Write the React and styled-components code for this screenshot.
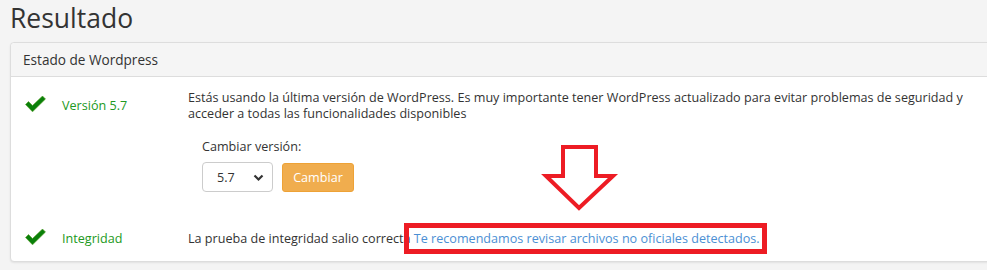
import React from "react";
import styled, { createGlobalStyle } from "styled-components";

const Global = createGlobalStyle`
  html, body { margin: 0; padding: 0; background: #f4f4f4; overflow: hidden; }
  body { font-family: "Open Sans", "Liberation Sans", sans-serif; color: #333; font-size: 12.6px; }
`;

const Page = styled.div`
  position: relative;
  width: 987px;
  height: 270px;
  padding-left: 10px;
  box-sizing: border-box;
  overflow: hidden;
`;

const Title = styled.h1`
  margin: 0;
  padding-top: 1px;
  font-size: 26.5px;
  font-weight: 400;
  line-height: 34px;
  color: #333;
  height: 41px;
`;

const Panel = styled.section`
  width: 1000px;
  background: #fff;
  border: 1px solid #ddd;
  border-radius: 4px;
  box-shadow: 0 1px 2px rgba(0, 0, 0, 0.08);
`;

const PanelHeader = styled.div`
  background: #f5f5f5;
  border-bottom: 1px solid #ddd;
  border-radius: 4px 4px 0 0;
  height: 33px;
  padding: 0 12px;
  display: flex;
  align-items: center;
  font-size: 13.6px;
  color: #333;
`;

const PanelBody = styled.div`
  padding: 13px 15px 14px 14px;
  display: grid;
  grid-template-columns: 37px 126px 790px;
  align-items: center;
`;

const Icon = styled.span`
  display: flex;
  align-items: center;
  margin-top: -4px;
`;

const Label = styled.span`
  color: #229922;
  line-height: 16px;
`;

const Text = styled.div`
  line-height: 16px;
  color: #333;
`;

const Form = styled.div`
  grid-column: 3;
  padding-left: 14px;
  margin-top: 16px;
  margin-bottom: 39px;
`;

const FormLabel = styled.div`
  line-height: 18px;
  margin-bottom: 6px;
`;

const Controls = styled.div`
  display: flex;
  align-items: center;
  gap: 9px;
`;

const SelectBox = styled.div`
  position: relative;
  width: 71px;
  height: 30px;
  box-sizing: border-box;
  border: 1px solid #ccc;
  border-radius: 4px;
  background: #fff;
  display: flex;
  align-items: center;
  padding-left: 14px;
  color: #333;
  font-size: 12.6px;
`;

const Chevron = styled.svg`
  position: absolute;
  right: 8px;
  top: 11px;
`;

const Button = styled.button`
  height: 29px;
  width: 72px;
  border: 1px solid #eea236;
  border-radius: 3px;
  background: #f0ad4e;
  color: #fff;
  font-family: inherit;
  font-size: 12.6px;
  padding: 0;
`;

const Link = styled.a`
  color: #4b8fd4;
  text-decoration: none;
`;

const RedBox = styled.div`
  position: absolute;
  left: 404px;
  top: 223px;
  width: 363px;
  height: 31px;
  box-sizing: border-box;
  border: 5px solid #ed1c24;
  pointer-events: none;
`;

const Arrow = styled.svg`
  position: absolute;
  left: 540px;
  top: 140px;
`;

const Check = () => (
  <svg width="21" height="16" viewBox="0 0 21 16">
    <path d="M0.5 8.5 L3.5 5.5 L7.5 9.5 L17.5 0 L20.5 3 L7.5 15.8 Z" fill="#0a800a" stroke="#5aa02a" strokeWidth="0.6" />
  </svg>
);

export default function App() {
  return (
    <>
      <Global />
      <Page>
        <Title>Resultado</Title>
        <Panel>
          <PanelHeader>Estado de Wordpress</PanelHeader>
          <PanelBody>
            <Icon><Check /></Icon>
            <Label>Versión 5.7</Label>
            <Text>
              Estás usando la última versión de WordPress. Es muy importante tener WordPress actualizado para evitar problemas de seguridad y acceder a todas las funcionalidades disponibles
            </Text>
            <Form>
              <FormLabel>Cambiar versión:</FormLabel>
              <Controls>
                <SelectBox>
                  5.7
                  <Chevron width="11" height="8" viewBox="0 0 11 8">
                    <path d="M1.5 1.5 L5.5 5.5 L9.5 1.5" fill="none" stroke="#333" strokeWidth="2.2" />
                  </Chevron>
                </SelectBox>
                <Button>Cambiar</Button>
              </Controls>
            </Form>
            <Icon><Check /></Icon>
            <Label>Integridad</Label>
            <Text>
              La prueba de integridad salio correcta <Link href="#">Te recomendamos revisar archivos no oficiales detectados.</Link>
            </Text>
          </PanelBody>
        </Panel>
        <RedBox />
        <Arrow width="80" height="76" viewBox="0 0 80 76">
          <path d="M23 7 L56 7 L56 36 L73 36 L39 68 L6 36 L23 36 Z" fill="none" stroke="#ed1c24" strokeWidth="4" strokeLinejoin="miter" />
        </Arrow>
      </Page>
    </>
  );
}
